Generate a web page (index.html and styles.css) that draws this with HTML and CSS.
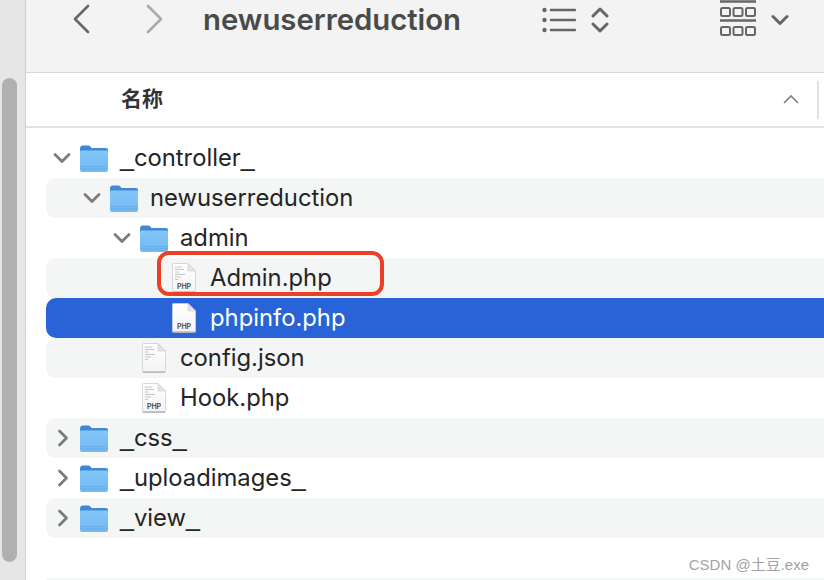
FILE: index.html
```html
<!DOCTYPE html>
<html lang="en">
<head>
  <meta charset="UTF-8" />
  <meta name="viewport" content="width=device-width, initial-scale=1.0"/>
  <title>newuserreduction</title>
  <link rel="stylesheet" href="styles.css">
</head>
<body>

  <svg class="defs" width="0" height="0">
    <defs>
      <linearGradient id="folderFront" x1="0" y1="0" x2="0" y2="1">
        <stop offset="0" stop-color="#84c7f9"/>
        <stop offset="1" stop-color="#72b9f1"/>
      </linearGradient>
      <linearGradient id="docFill" x1="0" y1="0" x2="0" y2="1">
        <stop offset="0" stop-color="#ffffff"/>
        <stop offset="1" stop-color="#f3f3f3"/>
      </linearGradient>
      <symbol id="folder" viewBox="0 0 30 28">
        <path d="M1 5 Q1 1.500 3.500 1.500 H9 Q10.500 1.500 11.500 2.800 L12.500 4 H27 Q29 4 29 6 V12 H1 Z" fill="#3f88d6"/>
        <path d="M1 7.500 Q1 6.500 2 6.500 H28 Q29 6.500 29 7.500 V25.500 Q29 27 27.500 27 H2.500 Q1 27 1 25.500 Z" fill="url(#folderFront)"/>
        <path d="M1 22.500 H29 M1 24.800 H29" stroke="#62abe5" stroke-width="0.7" fill="none"/>
        <path d="M1.500 27.400 H28.500" stroke="#8a9097" stroke-width="0.8" fill="none"/>
      </symbol>
      <symbol id="doc" viewBox="0 0 24 30">
        <path d="M1.500 0.500 H16 L23.500 8 V28.500 Q23.500 29.500 22.500 29.500 H1.500 Q0.500 29.500 0.500 28.500 V1.500 Q0.500 0.500 1.500 0.500 Z" fill="url(#docFill)" stroke="#cfcfcf" stroke-width="0.8"/>
        <path d="M16 0.500 V8 H23.500 Z" fill="#e4e4e4" stroke="#cfcfcf" stroke-width="0.6"/>
        <path d="M1 29 H23" stroke="#a8a8a8" stroke-width="1.200" fill="none"/>
      </symbol>
      <symbol id="lines" viewBox="0 0 24 30">
        <path d="M3 4 H10 M3 6.500 H12 M3 9 H7 M3 11.500 H13 M3 14 H9 M3 16.500 H6" stroke="#bdbdbd" stroke-width="0.9" fill="none"/>
      </symbol>
      <symbol id="chev-down" viewBox="0 0 18 12">
        <path d="M2 2.500 L9 9.500 L16 2.500" fill="none" stroke="#7c7c7c" stroke-width="2.800" stroke-linecap="round" stroke-linejoin="round"/>
      </symbol>
      <symbol id="chev-right" viewBox="0 0 12 18">
        <path d="M2.500 2 L9.500 9 L2.500 16" fill="none" stroke="#7c7c7c" stroke-width="2.800" stroke-linecap="round" stroke-linejoin="round"/>
      </symbol>
    </defs>
  </svg>

  <div class="window">
    <aside class="sidebar">
      <div class="scroll-thumb"></div>
    </aside>

    <main class="finder">
      <header class="toolbar">
        <svg class="nav-icon" width="18" height="30" viewBox="0 0 18 30">
          <path d="M16 2 L3 15 L16 28" fill="none" stroke="#666" stroke-width="2.600" stroke-linecap="round" stroke-linejoin="round"/>
        </svg>
        <svg class="nav-icon forward" width="18" height="30" viewBox="0 0 18 30">
          <path d="M2 2 L15 15 L2 28" fill="none" stroke="#aaa" stroke-width="2.600" stroke-linecap="round" stroke-linejoin="round"/>
        </svg>
        <h1 class="path-title">newuserreduction</h1>
        <svg class="list-icon" width="34" height="28" viewBox="0 0 34 28">
          <circle cx="2.500" cy="4" r="2.200" fill="#666"/>
          <circle cx="2.500" cy="14" r="2.200" fill="#666"/>
          <circle cx="2.500" cy="24" r="2.200" fill="#666"/>
          <path d="M9 4 H33 M9 14 H33 M9 24 H33" stroke="#666" stroke-width="2.400" stroke-linecap="round"/>
        </svg>
        <svg class="sort-icon" width="18" height="28" viewBox="0 0 18 28">
          <path d="M2 10 L9 3 L16 10 M2 18 L9 25 L16 18" fill="none" stroke="#666" stroke-width="3" stroke-linecap="round" stroke-linejoin="round"/>
        </svg>
        <svg class="gallery-icon" width="38" height="36" viewBox="0 0 38 36">
          <path d="M1 1.500 H37 M1 20.500 H37" stroke="#666" stroke-width="2.400"/>
          <g fill="none" stroke="#666" stroke-width="2">
            <rect x="2" y="8" width="9" height="8" rx="1.500"/>
            <rect x="14.500" y="8" width="9" height="8" rx="1.500"/>
            <rect x="27" y="8" width="9" height="8" rx="1.500"/>
            <rect x="2" y="27" width="9" height="8" rx="1.500"/>
            <rect x="14.500" y="27" width="9" height="8" rx="1.500"/>
            <rect x="27" y="27" width="9" height="8" rx="1.500"/>
          </g>
        </svg>
        <svg class="gallery-chev" width="18" height="12" viewBox="0 0 18 12">
          <path d="M2 2.500 L9 9.500 L16 2.500" fill="none" stroke="#666" stroke-width="3" stroke-linecap="round" stroke-linejoin="round"/>
        </svg>
      </header>

      <div class="column-head">
        <span class="column-name">名称</span>
        <svg class="column-sort" width="16" height="10" viewBox="0 0 16 10">
          <path d="M1 9 L8 2 L15 9" fill="none" stroke="#808080" stroke-width="1.600"/>
        </svg>
        <span class="column-sep"></span>
      </div>

      <ul class="tree">
        <li class="row depth-0">
          <svg class="twisty down"><use href="#chev-down"/></svg>
          <svg class="folder"><use href="#folder"/></svg>
          <span class="name"><span class="us">_</span>controller<span class="us">_</span></span>
        </li>
        <li class="row depth-1 stripe">
          <svg class="twisty down"><use href="#chev-down"/></svg>
          <svg class="folder"><use href="#folder"/></svg>
          <span class="name">newuserreduction</span>
        </li>
        <li class="row depth-2">
          <svg class="twisty down"><use href="#chev-down"/></svg>
          <svg class="folder"><use href="#folder"/></svg>
          <span class="name">admin</span>
        </li>
        <li class="row depth-3 stripe">
          <span class="twisty"></span>
          <svg class="doc"><use href="#doc"/><use href="#lines"/></svg>
          <span class="doc-tag">PHP</span>
          <span class="name">Admin.php</span>
          <span class="highlight-box"></span>
        </li>
        <li class="row depth-3 selected">
          <span class="twisty"></span>
          <svg class="doc"><use href="#doc"/></svg>
          <span class="doc-tag">PHP</span>
          <span class="name">phpinfo.php</span>
        </li>
        <li class="row depth-2 stripe">
          <span class="twisty"></span>
          <svg class="doc"><use href="#doc"/><use href="#lines"/></svg>
          <span class="name">config.json</span>
        </li>
        <li class="row depth-2">
          <span class="twisty"></span>
          <svg class="doc"><use href="#doc"/><use href="#lines"/></svg>
          <span class="doc-tag">PHP</span>
          <span class="name">Hook.php</span>
        </li>
        <li class="row depth-0 stripe">
          <svg class="twisty right"><use href="#chev-right"/></svg>
          <svg class="folder"><use href="#folder"/></svg>
          <span class="name"><span class="us">_</span>css<span class="us">_</span></span>
        </li>
        <li class="row depth-0">
          <svg class="twisty right"><use href="#chev-right"/></svg>
          <svg class="folder"><use href="#folder"/></svg>
          <span class="name"><span class="us">_</span>uploadimages<span class="us">_</span></span>
        </li>
        <li class="row depth-0 stripe">
          <svg class="twisty right"><use href="#chev-right"/></svg>
          <svg class="folder"><use href="#folder"/></svg>
          <span class="name"><span class="us">_</span>view<span class="us">_</span></span>
        </li>
      </ul>

      <div class="watermark">CSDN @土豆.exe</div>
      <div class="next-stripe"></div>
    </main>
  </div>

</body>
</html>
```

FILE: styles.css
```css
* {
  box-sizing: border-box;
}

html, body {
  margin: 0;
  height: 100%;
  overflow: hidden;
}

body {
  font-family: Inter, "Noto Sans CJK SC", sans-serif;
  background: #fff;
  color: #252525;
}

.defs {
  display: block;
  height: 0;
}

.window {
  display: flex;
  width: 824px;
  height: 580px;
}

.sidebar {
  width: 26px;
  flex: none;
  background: #e6e6e6;
  border-right: 1px solid #cfcfcf;
  padding: 78px 8px 18px 2px;
}

.scroll-thumb {
  height: 100%;
  background: #b0b0b0;
  border-radius: 8px;
}

.finder {
  flex: 1;
  min-width: 0;
  position: relative;
  display: flex;
  flex-direction: column;
}

.toolbar {
  height: 73px;
  flex: none;
  display: flex;
  align-items: flex-start;
  background: #f3f3f3;
  border-bottom: 1px solid #d9d9d9;
  padding: 1px 0 0 46px;
}

.nav-icon {
  flex: none;
  margin-top: 3px;
}

.nav-icon.forward {
  margin-left: 56px;
}

.path-title {
  margin: 0 0 0 39px;
  width: 339px;
  flex: none;
  font-size: 29.3px;
  line-height: 38px;
  font-weight: 600;
  color: #4a4a4a;
}

.list-icon {
  flex: none;
  margin-top: 5px;
}

.sort-icon {
  flex: none;
  margin: 5px 0 0 15px;
}

.gallery-icon {
  flex: none;
  margin: -1px 0 0 110px;
}

.gallery-chev {
  flex: none;
  margin: 13px 0 0 14px;
}

.column-head {
  height: 55px;
  flex: none;
  display: flex;
  align-items: center;
  border-bottom: 2px solid #e2e2e2;
  padding-left: 95px;
}

.column-name {
  font-size: 21px;
  font-weight: 700;
  color: #333;
  margin-top: -6px;
}

.column-sort {
  margin-left: auto;
  margin-top: -2px;
}

.column-sep {
  width: 2px;
  height: 38px;
  background: #e2e2e2;
  margin: 0 5px 0 18px;
}

.tree {
  list-style: none;
  margin: 10px 0 0;
  padding: 0 0 0 20px;
}

.row {
  position: relative;
  height: 40px;
  display: flex;
  align-items: center;
  font-size: 23.8px;
}

.stripe {
  background: #f4f5f5;
  border-radius: 10px 0 0 10px;
}

.selected {
  background: #2864d8;
  color: #fff;
  border-radius: 10px 0 0 10px;
}

.depth-0 { padding-left: 7px; }
.depth-1 { padding-left: 37px; }
.depth-2 { padding-left: 67px; }
.depth-3 { padding-left: 97px; }

.twisty {
  flex: none;
  width: 18px;
  height: 18px;
  margin-right: 8px;
}

.twisty.down {
  height: 12px;
}

.twisty.right {
  width: 12px;
  height: 18px;
  margin-left: 4px;
  margin-right: 10px;
}

.folder {
  flex: none;
  width: 30px;
  height: 28px;
  margin-right: 11px;
}

.doc {
  flex: none;
  width: 24px;
  height: 30px;
  margin: 0 14px 0 3px;
}

.doc-tag {
  position: absolute;
  width: 26px;
  margin-left: 28px;
  margin-top: 18px;
  text-align: center;
  font-size: 7px;
  font-weight: 600;
  line-height: 8px;
  color: #444;
}

.name {
  white-space: nowrap;
  line-height: 30px;
}

/* the underscores are wider than Inter draws them */
.us {
  font-family: "Liberation Sans", sans-serif;
  font-size: 25px;
  line-height: 1;
}

.highlight-box {
  position: absolute;
  left: 111px;
  top: -7px;
  width: 227px;
  height: 45px;
  border: 4px solid #ec3f26;
  border-radius: 12px;
}

.watermark {
  position: absolute;
  right: 15px;
  bottom: 6px;
  font-family: "Liberation Sans", "Noto Sans CJK SC", sans-serif;
  font-size: 15px;
  color: #a3a3a3;
}

.next-stripe {
  position: absolute;
  left: 20px;
  right: 0;
  bottom: 0;
  height: 2px;
  background: #f4f5f5;
}
```
